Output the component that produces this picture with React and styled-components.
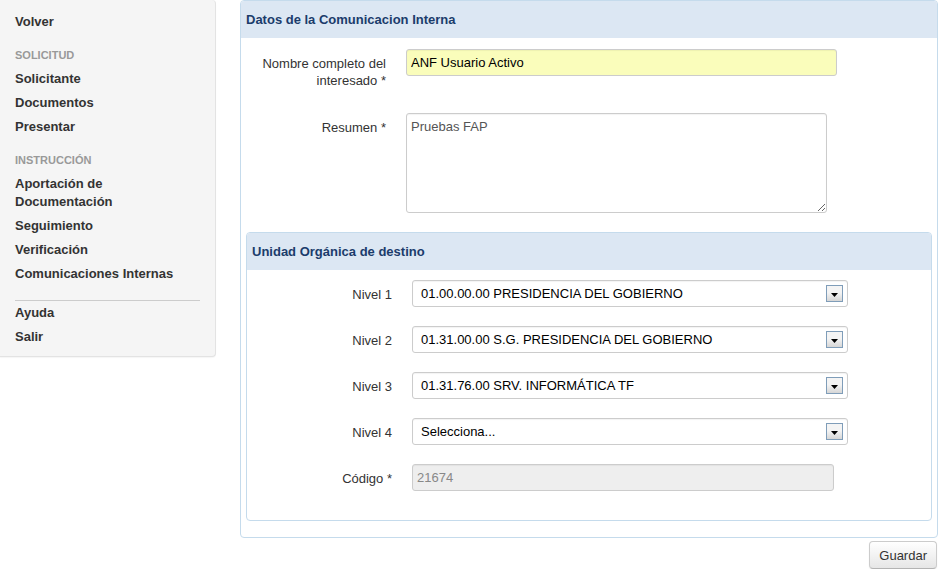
import React from "react";
import styled, { createGlobalStyle } from "styled-components";

const GlobalStyle = createGlobalStyle`
  html, body {
    margin: 0;
    padding: 0;
    background: #ffffff;
  }
  body {
    font-family: "Liberation Sans", Arial, sans-serif;
    font-size: 13px;
    color: #333333;
  }
`;

const menu = [
  { type: "item", label: "Volver" },
  { type: "header", label: "Solicitud" },
  { type: "item", label: "Solicitante" },
  { type: "item", label: "Documentos" },
  { type: "item", label: "Presentar" },
  { type: "header", label: "Instrucción" },
  { type: "item", label: "Aportación de Documentación", wrap: true },
  { type: "item", label: "Seguimiento" },
  { type: "item", label: "Verificación" },
  { type: "item", label: "Comunicaciones Internas" },
  { type: "divider" },
  { type: "item", label: "Ayuda" },
  { type: "item", label: "Salir" },
];

const niveles = [
  { label: "Nivel 1", value: "01.00.00.00 PRESIDENCIA DEL GOBIERNO" },
  { label: "Nivel 2", value: "01.31.00.00 S.G. PRESIDENCIA DEL GOBIERNO" },
  { label: "Nivel 3", value: "01.31.76.00 SRV. INFORMÁTICA TF" },
  { label: "Nivel 4", value: "Selecciona..." },
];

function ArrowButton() {
  return (
    <Arrow>
      <svg width="7" height="4" viewBox="0 0 7 4">
        <polygon points="0,0 7,0 3.5,4" fill="#000" />
      </svg>
    </Arrow>
  );
}

export default function App() {
  return (
    <Page>
      <GlobalStyle />
      <Sidebar>
        {menu.map((m, i) => {
          if (m.type === "header") return <MenuHeader key={i}>{m.label}</MenuHeader>;
          if (m.type === "divider") return <Divider key={i} />;
          return (
            <MenuItem key={i} narrow={m.wrap}>
              {m.label}
            </MenuItem>
          );
        })}
      </Sidebar>

      <Main>
        <Panel>
          <PanelHeader>Datos de la Comunicacion Interna</PanelHeader>
          <PanelBody>
            <Row>
              <Label>Nombre completo del interesado *</Label>
              <TextInput value="ANF Usuario Activo" readOnly highlight width={431} />
            </Row>
            <Row gap={24}>
              <Label>Resumen *</Label>
              <TextArea defaultValue="Pruebas FAP" />
            </Row>
          </PanelBody>

          <InnerPanel>
            <PanelHeader>Unidad Orgánica de destino</PanelHeader>
            <InnerBody>
              {niveles.map((n) => (
                <Row key={n.label} gap={19}>
                  <Label>{n.label}</Label>
                  <SelectBox>
                    <span>{n.value}</span>
                    <ArrowButton />
                  </SelectBox>
                </Row>
              ))}
              <Row gap={19}>
                <Label>Código *</Label>
                <TextInput value="21674" readOnly disabled width={422} />
              </Row>
            </InnerBody>
          </InnerPanel>
        </Panel>
        <Actions>
          <Button>Guardar</Button>
        </Actions>
      </Main>
    </Page>
  );
}

const Page = styled.div`
  display: flex;
  align-items: flex-start;
  gap: 24px;
  width: 942px;
`;

const Sidebar = styled.nav`
  width: 185px;
  flex-shrink: 0;
  padding: 10px 15px 7px 15px;
  background: #f5f5f5;
  border: 1px solid #e3e3e3;
  border-left: none;
  border-top: none;
  border-radius: 0 4px 4px 0;
  box-shadow: 0 1px 1px rgba(0, 0, 0, 0.04);
`;

const MenuItem = styled.div`
  font-weight: bold;
  font-size: 13px;
  color: #333333;
  line-height: 18px;
  padding: 3px 0;
  width: ${(p) => (p.narrow ? "120px" : "auto")};
`;

const MenuHeader = styled.div`
  text-transform: uppercase;
  font-size: 11px;
  font-weight: bold;
  color: #999999;
  line-height: 18px;
  padding: 12px 0 3px;
`;

const Divider = styled.div`
  height: 1px;
  background: #cccccc;
  margin: 14px 0 0;
`;

const Main = styled.div`
  width: 698px;
  display: flex;
  flex-direction: column;
`;

const Panel = styled.section`
  border: 1px solid #c5dbec;
  border-radius: 4px;
  padding-bottom: 16px;
  background: #ffffff;
`;

const PanelHeader = styled.h2`
  margin: 0;
  height: 37px;
  line-height: 37px;
  padding-left: 5px;
  background: #dce7f3;
  color: #1b3c6b;
  font-size: 13px;
  font-weight: bold;
  border-radius: 3px 3px 0 0;
`;

const PanelBody = styled.div`
  padding: 11px 0 0;
`;

const Row = styled.div`
  display: flex;
  align-items: flex-start;
  gap: 20px;
  margin-top: ${(p) => (p.gap ? `${p.gap}px` : "0")};
  &:first-child {
    margin-top: 0;
  }
`;

const Label = styled.label`
  width: 145px;
  flex-shrink: 0;
  text-align: right;
  line-height: 17px;
  padding-top: 6px;
  color: #333333;
  font-size: 13px;
`;

const TextInput = styled.input`
  box-sizing: border-box;
  width: ${(p) => p.width}px;
  height: 27px;
  padding: 0 4px;
  font-family: "Liberation Sans", Arial, sans-serif;
  font-size: 13px;
  color: ${(p) => (p.disabled ? "#888888" : "#000000")};
  background: ${(p) => (p.highlight ? "#fafdbb" : p.disabled ? "#eeeeee" : "#ffffff")};
  border: 1px solid #cccccc;
  border-radius: 3px;
  box-shadow: inset 0 1px 1px rgba(0, 0, 0, 0.05);
  outline: none;
`;

const TextArea = styled.textarea`
  box-sizing: border-box;
  width: 421px;
  height: 100px;
  padding: 4px 4px;
  font-family: "Liberation Sans", Arial, sans-serif;
  font-size: 13px;
  line-height: 17px;
  color: #555555;
  border: 1px solid #cccccc;
  border-radius: 3px;
  box-shadow: inset 0 1px 1px rgba(0, 0, 0, 0.05);
  outline: none;
  margin: 0;
`;

const InnerPanel = styled.section`
  margin: 19px 5px 0;
  border: 1px solid #c5dbec;
  border-radius: 4px;
`;

const InnerBody = styled.div`
  padding: 10px 0 29px;
`;

const SelectBox = styled.div`
  box-sizing: border-box;
  width: 436px;
  height: 27px;
  display: flex;
  align-items: center;
  justify-content: space-between;
  padding: 0 4px 0 8px;
  border: 1px solid #cccccc;
  border-radius: 3px;
  background: #ffffff;
  color: #000000;
  font-size: 13px;
  box-shadow: inset 0 1px 1px rgba(0, 0, 0, 0.05);
`;

const Arrow = styled.div`
  box-sizing: border-box;
  width: 17px;
  height: 17px;
  display: flex;
  align-items: flex-end;
  justify-content: center;
  padding-bottom: 4px;
  border: 1px solid #7f9db9;
  background: linear-gradient(#f4f4f4, #f4f4f4 45%, #d6d6d6);
`;

const Actions = styled.div`
  display: flex;
  justify-content: flex-end;
  padding: 3px 1px 0 0;
`;

const Button = styled.button`
  height: 28px;
  padding: 0 9px;
  font-family: "Liberation Sans", Arial, sans-serif;
  font-size: 13px;
  color: #333333;
  background: linear-gradient(#ffffff, #e6e6e6);
  border: 1px solid #cccccc;
  border-bottom-color: #b3b3b3;
  border-radius: 4px;
  box-shadow: 0 1px 2px rgba(0, 0, 0, 0.05);
`;
